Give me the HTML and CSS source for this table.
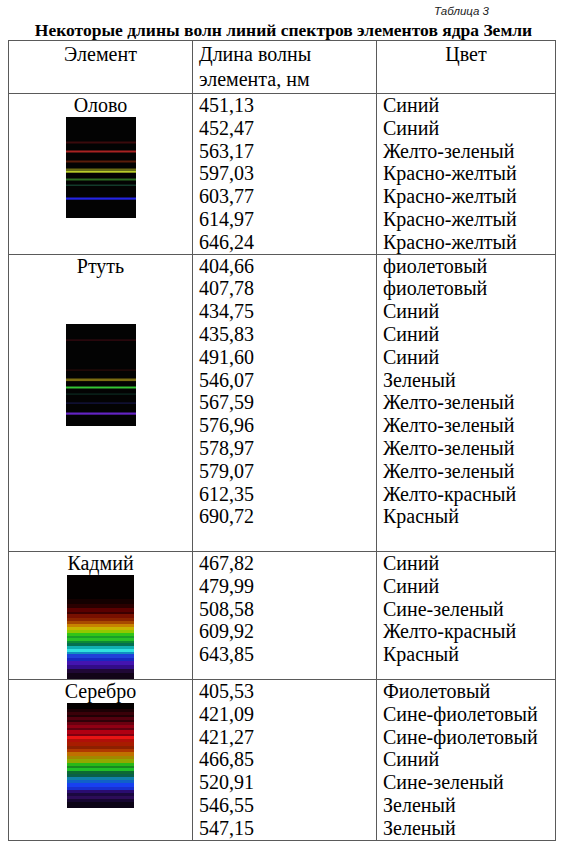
FILE: index.html
```html
<!DOCTYPE html>
<html lang="ru">
<head>
<meta charset="utf-8">
<title>Таблица 3</title>
<link rel="stylesheet" href="styles.css">
</head>
<body>
<div class="page">
  <div class="table-label">Таблица 3</div>
  <div class="table-title">Некоторые длины волн линий спектров элементов ядра Земли</div>
  <table class="spectra">
    <colgroup>
      <col class="c-el"><col class="c-wl"><col class="c-col">
    </colgroup>
    <thead>
      <tr>
        <th class="h-center">Элемент</th>
        <th class="h-left">Длина волны<br>элемента, нм</th>
        <th class="h-center">Цвет</th>
      </tr>
    </thead>
    <tbody>
      <tr>
        <td class="el">
          <div class="el-name">Олово</div>
          <svg class="spec spec-olovo" viewBox="0 0 70 101" preserveAspectRatio="none">
            <rect width="70" height="101" fill="#030303"/>
            <rect y="24.5" width="70" height="2" fill="#3a0a0c"/>
            <rect y="33.5" width="70" height="2" fill="#a82222"/>
            <rect y="43.5" width="70" height="2" fill="#5a1c0a"/>
            <rect y="51.5" width="70" height="1.6" fill="#6a6a12"/>
            <rect y="53.5" width="70" height="2.2" fill="#b8cc2a"/>
            <rect y="61.5" width="70" height="2" fill="#2c6e22"/>
            <rect y="67.5" width="70" height="1.5" fill="#123a2a"/>
            <rect y="80.5" width="70" height="2.2" fill="#2424e4"/>
          </svg>
        </td>
        <td class="vals">
          <div>451,13</div><div>452,47</div><div>563,17</div><div>597,03</div><div>603,77</div><div>614,97</div><div>646,24</div>
        </td>
        <td class="vals">
          <div>Синий</div><div>Синий</div><div>Желто-зеленый</div><div>Красно-желтый</div><div>Красно-желтый</div><div>Красно-желтый</div><div>Красно-желтый</div>
        </td>
      </tr>
      <tr>
        <td class="el">
          <div class="el-name">Ртуть</div>
          <svg class="spec spec-rtut" viewBox="0 0 70 102" preserveAspectRatio="none">
            <rect width="70" height="102" fill="#030303"/>
            <rect y="15.5" width="70" height="1.2" fill="#3a0a12"/>
            <rect y="45.5" width="70" height="1.2" fill="#2c0a0a"/>
            <rect y="54.5" width="70" height="2.6" fill="#7a6c12"/>
            <rect y="62.5" width="70" height="2" fill="#34c434"/>
            <rect y="69.5" width="70" height="1.2" fill="#0c2c22"/>
            <rect y="78.5" width="70" height="1.2" fill="#161646"/>
            <rect y="88.5" width="70" height="2.2" fill="#6424c4"/>
          </svg>
        </td>
        <td class="vals">
          <div>404,66</div><div>407,78</div><div>434,75</div><div>435,83</div><div>491,60</div><div>546,07</div><div>567,59</div><div>576,96</div><div>578,97</div><div>579,07</div><div>612,35</div><div>690,72</div><div class="blank">&nbsp;</div>
        </td>
        <td class="vals">
          <div>фиолетовый</div><div>фиолетовый</div><div>Синий</div><div>Синий</div><div>Синий</div><div>Зеленый</div><div>Желто-зеленый</div><div>Желто-зеленый</div><div>Желто-зеленый</div><div>Желто-зеленый</div><div>Желто-красный</div><div>Красный</div><div class="blank">&nbsp;</div>
        </td>
      </tr>
      <tr>
        <td class="el">
          <div class="el-name">Кадмий</div>
          <svg class="spec spec-wide" viewBox="0 0 67 104" preserveAspectRatio="none">
            <rect width="67" height="104" fill="#040000"/>
            <rect y="24" width="67" height="5" fill="#140000"/>
            <rect y="29" width="67" height="4" fill="#2a0000"/>
            <rect y="33" width="67" height="4" fill="#5a0000"/>
            <rect y="37" width="67" height="2" fill="#3c0000"/>
            <rect y="39" width="67" height="4" fill="#781000"/>
            <rect y="43" width="67" height="3" fill="#8a2400"/>
            <rect y="46" width="67" height="3" fill="#a84800"/>
            <rect y="49" width="67" height="3" fill="#c88200"/>
            <rect y="52" width="67" height="3" fill="#c8b400"/>
            <rect y="55" width="67" height="3" fill="#90c800"/>
            <rect y="58" width="67" height="3" fill="#30c418"/>
            <rect y="61" width="67" height="2" fill="#18a028"/>
            <rect y="63" width="67" height="3" fill="#28c028"/>
            <rect y="66" width="67" height="2" fill="#0c8a34"/>
            <rect y="68" width="67" height="3" fill="#047050"/>
            <rect y="71" width="67" height="3" fill="#10b0b0"/>
            <rect y="74" width="67" height="3" fill="#30e0e0"/>
            <rect y="77" width="67" height="2" fill="#1090c0"/>
            <rect y="79" width="67" height="4" fill="#2040d8"/>
            <rect y="83" width="67" height="3" fill="#1828c0"/>
            <rect y="86" width="67" height="4" fill="#4414b0"/>
            <rect y="90" width="67" height="4" fill="#320c88"/>
            <rect y="94" width="67" height="4" fill="#200836"/>
            <rect y="98" width="67" height="6" fill="#120418"/>
          </svg>
        </td>
        <td class="vals">
          <div>467,82</div><div>479,99</div><div>508,58</div><div>609,92</div><div>643,85</div>
        </td>
        <td class="vals">
          <div>Синий</div><div>Синий</div><div>Сине-зеленый</div><div>Желто-красный</div><div>Красный</div>
        </td>
      </tr>
      <tr>
        <td class="el">
          <div class="el-name">Серебро</div>
          <svg class="spec spec-wide spec-ag" viewBox="0 0 67 105" preserveAspectRatio="none">
            <rect width="67" height="105" fill="#040000"/>
            <rect y="6" width="67" height="3" fill="#1c0004"/>
            <rect y="9" width="67" height="3" fill="#3a0008"/>
            <rect y="12" width="67" height="2" fill="#200004"/>
            <rect y="14" width="67" height="3" fill="#52000e"/>
            <rect y="17" width="67" height="2" fill="#300008"/>
            <rect y="19" width="67" height="3" fill="#6a0010"/>
            <rect y="22" width="67" height="3" fill="#900014"/>
            <rect y="25" width="67" height="2" fill="#600010"/>
            <rect y="27" width="67" height="4" fill="#b00012"/>
            <rect y="31" width="67" height="2" fill="#800010"/>
            <rect y="33" width="67" height="3" fill="#e81414"/>
            <rect y="36" width="67" height="3" fill="#b01008"/>
            <rect y="39" width="67" height="4" fill="#a81c00"/>
            <rect y="43" width="67" height="3" fill="#8c2000"/>
            <rect y="46" width="67" height="3" fill="#b03800"/>
            <rect y="49" width="67" height="4" fill="#c07000"/>
            <rect y="53" width="67" height="3" fill="#a08800"/>
            <rect y="56" width="67" height="4" fill="#90a800"/>
            <rect y="60" width="67" height="3" fill="#28b818"/>
            <rect y="63" width="67" height="2" fill="#168a20"/>
            <rect y="65" width="67" height="3" fill="#20c028"/>
            <rect y="68" width="67" height="3" fill="#0c6a34"/>
            <rect y="71" width="67" height="3" fill="#0a6048"/>
            <rect y="74" width="67" height="3" fill="#1080a8"/>
            <rect y="77" width="67" height="3" fill="#1060c8"/>
            <rect y="80" width="67" height="4" fill="#1840f0"/>
            <rect y="84" width="67" height="3" fill="#1830d0"/>
            <rect y="87" width="67" height="3" fill="#2a0c70"/>
            <rect y="90" width="67" height="3" fill="#1a0840"/>
            <rect y="93" width="67" height="3" fill="#2c0c58"/>
            <rect y="96" width="67" height="3" fill="#160630"/>
            <rect y="99" width="67" height="6" fill="#0c0416"/>
          </svg>
        </td>
        <td class="vals">
          <div>405,53</div><div>421,09</div><div>421,27</div><div>466,85</div><div>520,91</div><div>546,55</div><div>547,15</div>
        </td>
        <td class="vals">
          <div>Фиолетовый</div><div>Сине-фиолетовый</div><div>Сине-фиолетовый</div><div>Синий</div><div>Сине-зеленый</div><div>Зеленый</div><div>Зеленый</div>
        </td>
      </tr>
    </tbody>
  </table>
</div>
</body>
</html>
```

FILE: styles.css
```css
html, body {
  margin: 0;
  padding: 0;
  background: #ffffff;
}

.page {
  padding: 0 0 0 8px;
  color: #000;
  font-family: "Liberation Serif", "Times New Roman", serif;
}

.table-label {
  height: 21px;
  line-height: 22px;
  padding-right: 78px;
  text-align: right;
  font-family: "Liberation Sans", Arial, sans-serif;
  font-style: italic;
  font-size: 11.5px;
  color: #222;
}

.table-title {
  width: 551px;
  height: 19px;
  line-height: 19px;
  text-align: center;
  font-weight: bold;
  font-size: 17.5px;
}

.spectra {
  width: 547px;
  border-collapse: collapse;
  table-layout: fixed;
  font-size: 20px;
}

.c-el { width: 184px; }
.c-wl { width: 184px; }
.c-col { width: 179px; }

.spectra th,
.spectra td {
  border: 1px solid #5a5a5a;
  padding: 0 6px;
  vertical-align: top;
  font-weight: normal;
}

.spectra th {
  line-height: 25px;
  padding-top: 1px;
  padding-bottom: 1px;
  height: 50px;
}

.h-center { text-align: center; }
.h-left { text-align: left; }

.vals {
  line-height: 22.8px;
  white-space: nowrap;
}

.el {
  text-align: center;
  line-height: 22.8px;
}

.el-name {
  height: 23px;
}

.spec {
  display: block;
  margin: 0 auto;
}

.spec-olovo {
  width: 70px;
  height: 101px;
}

.spec-rtut {
  width: 70px;
  height: 102px;
  margin-top: 46px;
}

.spec-wide {
  width: 67px;
  height: 104px;
}

.spec-ag {
  height: 105px;
}
```
